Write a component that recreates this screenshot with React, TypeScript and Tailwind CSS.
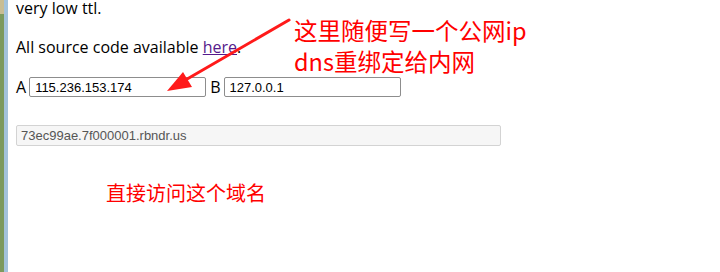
import React from "react";

export default function App() {
  return (
    <div className="relative w-[720px] h-[272px] overflow-hidden bg-white flex">
      {/* left window strip */}
      <div className="w-[8px] h-full flex shrink-0">
        <div className="w-[4px] h-full flex flex-col">
          <div className="h-[14px] bg-[#c8bd93]" />
          <div className="flex-1 bg-[#7c9a5e]" />
        </div>
        <div className="w-[4px] h-full bg-[#a3c3dc]" />
      </div>
      <div className="flex-1 pl-[8px] font-['Open_Sans','Noto_Sans',sans-serif] text-[16px] text-black">
        <p className="leading-[20px] -mt-[2px]">very low ttl.</p>
        <p className="leading-[20px] mt-[19px]">
          All source code available{" "}
          <a className="text-[#551a8b] underline">here</a>.
        </p>
        <div className="mt-[20px] flex items-center h-[20px]">
          <span className="leading-[20px] mr-[3px]">A</span>
          <input
            readOnly
            value="115.236.153.174"
            className="w-[177px] h-[20px] border border-[#8d8d8d] rounded-[2px] px-[5px] font-['Liberation_Sans',Arial,sans-serif] text-[13px] text-black outline-none"
          />
          <span className="leading-[20px] ml-[4px] mr-[4px]">B</span>
          <input
            readOnly
            value="127.0.0.1"
            className="w-[177px] h-[20px] border border-[#8d8d8d] rounded-[2px] px-[4px] font-['Liberation_Sans',Arial,sans-serif] text-[13px] text-black outline-none"
          />
        </div>
        <div className="mt-[25px]">
          <input
            readOnly
            value="73ec99ae.7f000001.rbndr.us"
            className="w-[485px] h-[21px] border border-[#d3d3d3] rounded-[2px] bg-[#f6f6f6] px-[4px] font-['Liberation_Sans',Arial,sans-serif] text-[13px] text-[#555555] outline-none"
          />
        </div>
      </div>

      {/* annotations */}
      <svg className="absolute left-0 top-0" width="720" height="272" viewBox="0 0 720 272">
        <line x1="289" y1="20" x2="182" y2="82" stroke="#ff1a1a" strokeWidth="3" strokeLinecap="round" />
        <polygon points="167,91 183,72 192,87" fill="#ff1a1a" />
      </svg>
      <div className="absolute left-[294px] top-[15px] font-['Noto_Sans_CJK_SC',sans-serif] text-[23.5px] leading-[31px] text-[#ff0000]">
        <div>这里随便写一个公网ip</div>
        <div>dns重绑定给内网</div>
      </div>
      <div className="absolute left-[106px] top-[179px] font-['Noto_Sans_CJK_SC',sans-serif] text-[20px] leading-[28px] text-[#ff0000]">
        直接访问这个域名
      </div>
    </div>
  );
}
